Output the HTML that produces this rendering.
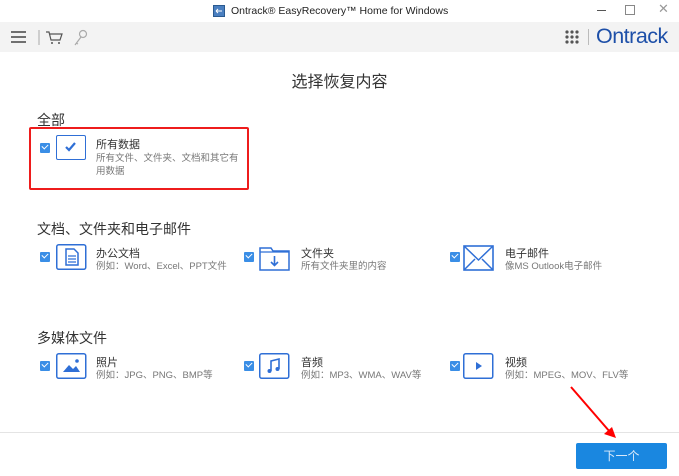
<!DOCTYPE html><html><head><meta charset="utf-8"><style>
body{margin:0;width:679px;height:476px;background:#fff;font-family:"Liberation Sans","Noto Sans CJK SC",sans-serif;position:relative;overflow:hidden;color:#333}
.a{position:absolute}
.cb{position:absolute;width:10px;height:10px;background:#3a8ee6;border-radius:1px}
.cb:after{content:"";position:absolute;left:2px;top:1px;width:5px;height:3px;border-left:1.5px solid #fff;border-bottom:1.5px solid #fff;transform:rotate(-45deg)}
.ic{position:absolute;width:29px;height:24px}
.t{position:absolute;font-size:11px;color:#333;white-space:nowrap}
.d{position:absolute;font-size:9.5px;color:#777;white-space:nowrap;line-height:13px}
.h{position:absolute;font-size:14px;color:#333}
</style></head><body>
<div class="a" style="left:0;top:0;width:679px;height:22px;background:#fff"></div>
<svg class="a" style="left:213px;top:5px" width="12" height="12"><rect x="0.5" y="0.5" width="11" height="11" fill="#4a7fc0" stroke="#2a5a90"/><path d="M3 6h6M3 6l2-2M3 6l2 2" stroke="#fff" fill="none"/></svg>
<div class="a" style="left:231px;top:5px;font-size:10.5px;color:#222">Ontrack® EasyRecovery™ Home for Windows</div>
<div class="a" style="left:597px;top:10px;width:9px;height:1px;background:#555"></div>
<div class="a" style="left:625px;top:5px;width:8px;height:8px;border:1px solid #888"></div>
<div class="a" style="left:658px;top:1px;font-size:13px;color:#999">✕</div>
<div class="a" style="left:0;top:22px;width:679px;height:30px;background:#f3f3f3"></div>
<svg class="a" style="left:10px;top:29px" width="80" height="18">
<path d="M1 3h15M1 8h15M1 13h15" stroke="#444" stroke-width="1.6"/>
<path d="M29 1v15" stroke="#aaa"/>
<path d="M36 3h3l2 8h9l2-6h-12" stroke="#555" fill="none" stroke-width="1.2"/><circle cx="42" cy="14" r="1" fill="#555"/><circle cx="49" cy="14" r="1" fill="#555"/>
<circle cx="73" cy="5" r="3.5" stroke="#aaa" fill="none" stroke-width="1.2"/><path d="M71 8l-6 8M66 14l2 1" stroke="#aaa" stroke-width="1.2"/>
</svg>
<svg class="a" style="left:564px;top:29px" width="20" height="16"><g fill="#555"><circle cx="3" cy="3" r="1.6"/><circle cx="8" cy="3" r="1.6"/><circle cx="13" cy="3" r="1.6"/><circle cx="3" cy="8" r="1.6"/><circle cx="8" cy="8" r="1.6"/><circle cx="13" cy="8" r="1.6"/><circle cx="3" cy="13" r="1.6"/><circle cx="8" cy="13" r="1.6"/><circle cx="13" cy="13" r="1.6"/></g></svg>
<div class="a" style="left:588px;top:29px;width:1px;height:16px;background:#bbb"></div>
<div class="a" style="left:596px;top:24px;font-size:21.5px;color:#1d4fa8;letter-spacing:-0.5px">Ontrack</div>
<div class="a" style="left:0;top:68px;width:679px;text-align:center;font-size:16px;color:#333">选择恢复内容</div>
<div class="h" style="left:37px;top:110px">全部</div>
<div class="a" style="left:29px;top:127px;width:216px;height:59px;border:2px solid #ee1c1c;border-radius:2px"></div>
<div class="cb" style="left:40px;top:143px"></div>
<div class="ic" style="left:56px;top:135px;border:1.5px solid #2f6fd6;border-radius:2px;box-sizing:border-box;width:30px;height:25px"><svg width="27" height="22"><path d="M9 11l3 3 6-7" stroke="#2f6fd6" stroke-width="2.2" fill="none"/></svg></div>
<div class="t" style="left:96px;top:136px">所有数据</div>
<div class="d" style="left:96px;top:152px">所有文件、文件夹、文档和其它有<br>用数据</div>
<div class="h" style="left:37px;top:219px">文档、文件夹和电子邮件</div>
<div class="cb" style="left:40px;top:252px"></div>
<svg class="a" style="left:56px;top:244px" width="31" height="27"><rect x="0.75" y="0.75" width="29" height="24.5" rx="2" fill="none" stroke="#2f6fd6" stroke-width="1.5"/><path d="M10 5h8l4 4v12h-12z" fill="none" stroke="#2f6fd6" stroke-width="1.5"/><path d="M12 12h8M12 15h8M12 18h8" stroke="#2f6fd6" stroke-width="1.3"/></svg>
<div class="t" style="left:96px;top:245px">办公文档</div>
<div class="d" style="left:96px;top:260px">例如：Word、Excel、PPT文件</div>
<div class="cb" style="left:244px;top:252px"></div>
<svg class="a" style="left:259px;top:244px" width="32" height="28"><path d="M1 4v22h29V7H14l-2-3z" fill="none" stroke="#2f6fd6" stroke-width="1.5"/><path d="M1 8h29" stroke="#2f6fd6" stroke-width="1.3"/><path d="M15.5 12v9M12 18l3.5 3.5 3.5-3.5" stroke="#2f6fd6" stroke-width="1.6" fill="none"/></svg>
<div class="t" style="left:301px;top:245px">文件夹</div>
<div class="d" style="left:301px;top:260px">所有文件夹里的内容</div>
<div class="cb" style="left:450px;top:252px"></div>
<svg class="a" style="left:463px;top:244px" width="32" height="28"><rect x="1" y="2" width="29" height="24" fill="none" stroke="#2f6fd6" stroke-width="1.6"/><path d="M1 2l14.5 14L30 2M1 26l11-11M30 26L19 15" stroke="#2f6fd6" stroke-width="1.5" fill="none"/></svg>
<div class="t" style="left:505px;top:245px">电子邮件</div>
<div class="d" style="left:505px;top:260px">像MS Outlook电子邮件</div>
<div class="h" style="left:37px;top:328px">多媒体文件</div>
<div class="cb" style="left:40px;top:361px"></div>
<svg class="a" style="left:56px;top:353px" width="31" height="27"><rect x="0.75" y="0.75" width="29" height="24.5" rx="2" fill="none" stroke="#2f6fd6" stroke-width="1.5"/><path d="M7 19l6-7 4 4 3-3 4 6z" fill="#2f6fd6"/><circle cx="21" cy="8" r="1.8" fill="#2f6fd6"/></svg>
<div class="t" style="left:96px;top:354px">照片</div>
<div class="d" style="left:96px;top:369px">例如：JPG、PNG、BMP等</div>
<div class="cb" style="left:244px;top:361px"></div>
<svg class="a" style="left:259px;top:353px" width="31" height="27"><rect x="0.75" y="0.75" width="29" height="24.5" rx="2" fill="none" stroke="#2f6fd6" stroke-width="1.5"/><path d="M12 18V8l8-2v10" stroke="#2f6fd6" stroke-width="1.6" fill="none"/><circle cx="10.5" cy="18" r="2" fill="#2f6fd6"/><circle cx="18.5" cy="16" r="2" fill="#2f6fd6"/></svg>
<div class="t" style="left:301px;top:354px">音频</div>
<div class="d" style="left:301px;top:369px">例如：MP3、WMA、WAV等</div>
<div class="cb" style="left:450px;top:361px"></div>
<svg class="a" style="left:463px;top:353px" width="31" height="27"><rect x="0.75" y="0.75" width="29" height="24.5" rx="2" fill="none" stroke="#2f6fd6" stroke-width="1.5"/><path d="M13 9v8l6-4z" fill="#2f6fd6"/></svg>
<div class="t" style="left:505px;top:354px">视频</div>
<div class="d" style="left:505px;top:369px">例如：MPEG、MOV、FLV等</div>
<div class="a" style="left:0;top:432px;width:679px;height:1px;background:#e4e4e4"></div>
<div class="a" style="left:576px;top:443px;width:91px;height:26px;background:#1a87e0;border-radius:2px;color:#dbeafa;font-size:12px;text-align:center;line-height:26px">下一个</div>
<svg class="a" style="left:565px;top:383px" width="60" height="60"><path d="M6 4L45 49" stroke="#f00" stroke-width="2"/><path d="M51 55l-12-4 8-7z" fill="#f00"/></svg>
</body></html>
